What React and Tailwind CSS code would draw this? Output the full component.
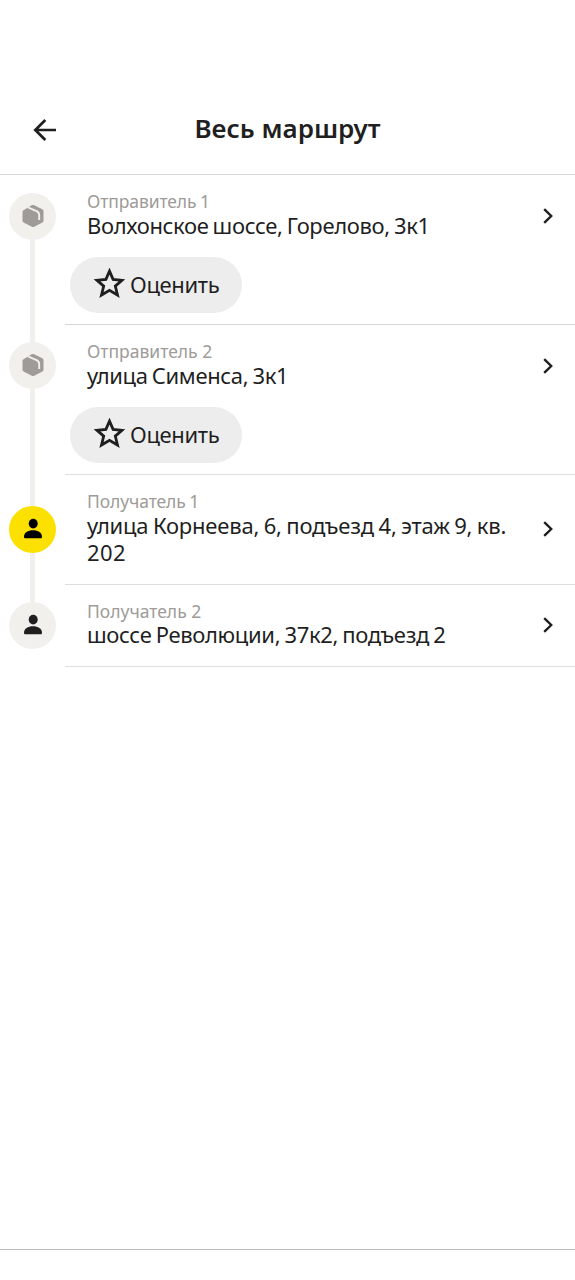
const INK = "text-[#1f1f1f]";

function BoxIcon() {
  return (
    <svg width="24" height="24" viewBox="0 0 24 24" className="relative -top-px">
      <path
        d="M2.2 6.4L10.6 1.3Q11.9 .6 13.2 1.3L21.3 5.3Q22.5 5.9 22.5 7.2V16.8Q22.5 18 21.4 18.6L13.2 22.8Q12 23.4 10.8 22.8L2.6 18.6Q1.5 18 1.5 16.8V7.8Q1.5 6.9 2.2 6.4Z"
        fill="#9e9b98"
      />
      <path d="M7 3.3L15.6 7.2Q18.2 8.4 18.2 11V15.9" fill="none" stroke="#f1f0ed" strokeWidth="1.9" />
    </svg>
  );
}

function PersonIcon() {
  return (
    <svg width="20" height="22" viewBox="0 0 20 22" className="relative -top-px" fill="currentColor">
      <ellipse cx="10.2" cy="5.6" rx="4.5" ry="4.9" />
      <path d="M1 18.8C1 14.5 5 12.3 10 12.3S19 14.5 19 18.8Q19 20.3 18 20.3H2Q1 20.3 1 18.8Z" />
    </svg>
  );
}

function Chevron() {
  return (
    <svg width="12" height="18" viewBox="0 0 12 18" fill="none" stroke="#1f1f1f" strokeWidth="2.4">
      <path d="M2.2 2.2L9.2 9L2.2 15.8" />
    </svg>
  );
}

function Rail({ top, circle, first, last, children }) {
  return (
    <div className="flex w-[65px] shrink-0 flex-col items-center">
      <div className={`w-[5px] shrink-0 ${top} ${first ? "" : "bg-[#f1f0ed]"}`} />
      <div className={`flex size-[47px] shrink-0 items-center justify-center rounded-full ${circle}`}>{children}</div>
      <div className={`w-[5px] flex-1 ${last ? "" : "bg-[#f1f0ed]"}`} />
    </div>
  );
}

function Stop({ height, border, rail, label, labelClass, lines, rate, chevron }) {
  return (
    <li className={`flex ${height}`}>
      {rail}
      <div className={`flex flex-1 flex-col border-b ${border}`}>
        <div className="flex">
          <div className="flex-1 whitespace-nowrap pl-[22px] pt-[14px]">
            <div className={`text-[17.5px] leading-6 text-[#9e9b98] ${labelClass}`}>{label}</div>
            {lines.map(([text, cls]) => (
              <div key={text} className={`text-[22px] leading-[27px] ${cls}`}>{text}</div>
            ))}
          </div>
          <div className={`mr-[21px] ${chevron}`}>
            <Chevron />
          </div>
        </div>
        {rate && (
          <button className="ml-[5px] mt-[18px] flex h-[56px] w-[172px] items-center rounded-full bg-[#ededed] pb-[2px] pl-[23px]">
            <svg width="32" height="32" viewBox="0 0 32 32" fill="none" stroke="#1f1f1f" strokeWidth="2.8">
              <path d="M16.5 3.1L20.1 11.4L29 12.3L22.3 18.1L24.5 27L16.5 22.3L8.5 27L10.7 18.1L4 12.3L12.9 11.4Z" />
            </svg>
            <span className="ml-[5px] whitespace-nowrap text-[22px] leading-7 tracking-[-0.35px]">Оценить</span>
          </button>
        )}
      </div>
    </li>
  );
}

export default function App() {
  return (
    <main className={`flex h-[1280px] w-[575px] flex-col bg-white font-['Noto_Sans',sans-serif] ${INK}`}>
      <header className="flex h-[175px] items-end border-b border-[#d9d9d9] pb-[28px]">
        <button className="ml-[32px] flex h-8 w-[26px] items-center">
          <svg width="26" height="24" viewBox="0 0 26 24" fill="none" stroke="#1f1f1f" strokeWidth="2.7">
            <path d="M24 12H3M13.3 2L3.3 12L13.3 22" />
          </svg>
        </button>
        <h1 className="mb-[2px] mr-[58px] flex-1 whitespace-nowrap text-center text-[26px] font-semibold leading-8">Весь маршрут</h1>
      </header>
      <ul className="flex flex-1 flex-col">
        <Stop
          height="h-[150px]"
          border="border-[#d6d6d6]"
          rail={<Rail first top="h-[18px]" circle="bg-[#f1f0ed]"><BoxIcon /></Rail>}
          label="Отправитель 1"
          labelClass="-mb-px tracking-[-0.1px] [word-spacing:-1px]"
          lines={[["Волхонское шоссе, Горелово, 3к1", "tracking-[-0.35px] [word-spacing:-1.2px]"]]}
          chevron="mt-[32px]"
          rate
        />
        <Stop
          height="h-[150px]"
          border="border-[#dedede]"
          rail={<Rail top="h-[17px]" circle="bg-[#f1f0ed]"><BoxIcon /></Rail>}
          label="Отправитель 2"
          labelClass="-mb-px"
          lines={[["улица Сименса, 3к1", "tracking-[-0.35px] [word-spacing:-1.2px]"]]}
          chevron="mt-[32px]"
          rate
        />
        <Stop
          height="h-[110px]"
          border="border-[#dedede]"
          rail={<Rail top="h-[31px]" circle="bg-[#fce000] text-black"><PersonIcon /></Rail>}
          label="Получатель 1"
          labelClass="-mb-px tracking-[-0.1px] [word-spacing:-1px]"
          lines={[["улица Корнеева, 6, подъезд 4, этаж 9, кв.", "tracking-[-0.2px] [word-spacing:-1px]"], ["202", "tracking-[0.4px]"]]}
          chevron="mt-[45px]"
        />
        <Stop
          height="h-[82px]"
          border="border-[#dedede]"
          rail={<Rail last top="h-[17px]" circle="bg-[#f1f0ed]"><PersonIcon /></Rail>}
          label="Получатель 2"
          labelClass="-mb-0.5"
          lines={[["шоссе Революции, 37к2, подъезд 2", "tracking-[-0.33px] [word-spacing:-1.2px]"]]}
          chevron="mt-[31px]"
        />
      </ul>
      <footer className="h-[31px] border-t border-[#bdbdbd]" />
    </main>
  );
}
